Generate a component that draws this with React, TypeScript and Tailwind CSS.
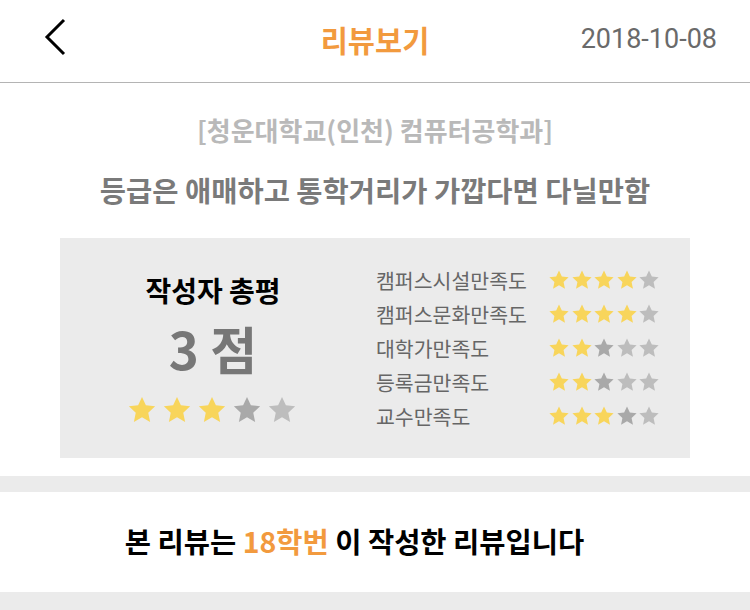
import React from "react"

const kr = { fontFamily: '"Noto Sans CJK KR", "Noto Sans", sans-serif' }

const ratings = [
  { name: "캠퍼스시설만족도", score: 4 },
  { name: "캠퍼스문화만족도", score: 4 },
  { name: "대학가만족도", score: 2 },
  { name: "등록금만족도", score: 2 },
  { name: "교수만족도", score: 3 },
]

function Star({ className }: { className: string }) {
  return (
    <svg viewBox="0 0 24 24" className={className}>
      <polygon points="12,1.5 15.1,8.2 22.5,9 17,14.1 18.5,21.5 12,17.8 5.5,21.5 7,14.1 1.5,9 8.9,8.2" />
    </svg>
  )
}

function Stars({ score, size }: { score: number; size: "lg" | "sm" }) {
  return (
    <div className={size === "lg" ? "flex gap-[5px]" : "flex gap-[0.5px]"}>
      {[0, 1, 2, 3, 4].map((i) => {
        let color = "fill-[#bdbdbd]"
        if (i < score) color = "fill-[#f8d55b]"
        else if (i === score && i < 4) color = "fill-[#a9a9a9]"
        return (
          <Star
            key={i}
            className={(size === "lg" ? "h-[30px] w-[30px] " : "h-[22px] w-[22px] ") + color}
          />
        )
      })}
    </div>
  )
}

export default function App() {
  return (
    <div className="h-[610px] w-[750px] overflow-hidden bg-white" style={kr}>
      <header className="relative flex h-[83px] items-center justify-center border-b border-[#b4b4b4]">
        <button className="absolute left-[42px] top-[17px]">
          <svg viewBox="0 0 26 40" className="h-[40px] w-[26px]" fill="none" stroke="#000" strokeWidth="3">
            <path d="M22 3 L5 20 L22 37" />
          </svg>
        </button>
        <h1 className="-mt-1 text-[29.5px] font-bold text-[#f29a3e]">리뷰보기</h1>
        <span
          className="absolute right-[33px] top-[19px] text-[27px] text-[#6a6a6a]"
          style={{ fontFamily: "Roboto, sans-serif" }}
        >
          2018-10-08
        </span>
      </header>

      <div className="pt-[29px] text-center">
        <p className="text-[26px] font-bold leading-[36px] text-[#b9b9b9]">[청운대학교(인천) 컴퓨터공학과]</p>
        <p className="mt-[24px] text-[28.5px] font-bold leading-[36px] text-[#7a7a7a]">
          등급은 애매하고 통학거리가 가깝다면 다닐만함
        </p>
      </div>

      <section className="mx-[60px] mt-[30px] flex h-[220px] bg-[#ebebeb]">
        <div className="flex w-[306px] flex-col items-center pt-[34px]">
          <h2 className="text-[28px] font-bold leading-[36px] text-black">작성자 총평</h2>
          <p className="mt-[12px] text-[51px] font-bold leading-[56px] text-[#777]">3 점</p>
          <div className="ml-[-2px] mt-[19px]">
            <Stars score={3} size="lg" />
          </div>
        </div>
        <div className="flex flex-col pt-[25px] pl-[10px]">
          {ratings.map((r) => (
            <div key={r.name} className="flex h-[34px] items-center">
              <span className="w-[172px] text-[20.5px] text-[#666]">{r.name}</span>
              <Stars score={r.score} size="sm" />
            </div>
          ))}
        </div>
      </section>

      <div className="mt-[18px] h-[16px] bg-[#ebebeb]" />
      <div className="flex h-[100px] items-center justify-center pr-[41px]">
        <p className="-mt-[2px] text-[28.5px] font-bold text-black">
          본 리뷰는 <span className="text-[#f29a3e]">18학번</span> 이 작성한 리뷰입니다
        </p>
      </div>
      <div className="h-[30px] bg-[#ebebeb]" />
    </div>
  )
}
